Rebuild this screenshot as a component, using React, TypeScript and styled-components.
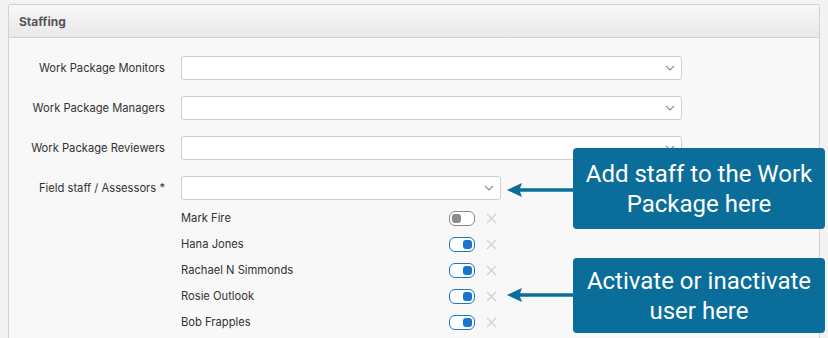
import React from "react";
import styled, { createGlobalStyle } from "styled-components";

const Global = createGlobalStyle`
  html, body { margin: 0; padding: 0; background: #f3f3f3; }
  body { font-family: Inter, "Noto Sans", sans-serif; }
`;

const Page = styled.div`
  position: relative;
  width: 828px;
  height: 338px;
  overflow: hidden;
  padding: 4px 8px 0 8px;
  box-sizing: border-box;
`;

const Panel = styled.section`
  border: 1px solid #d2d2d2;
  border-bottom: none;
  border-radius: 3px 3px 0 0;
  background: #f8f8f8;
  height: 340px;
  box-sizing: border-box;
`;

const Header = styled.div`
  height: 32px;
  display: flex;
  align-items: center;
  padding-left: 10px;
  background: linear-gradient(#f7f7f7, #e9e9e9);
  border-bottom: 1px solid #d2d2d2;
  font-size: 12px;
  font-weight: 700;
  color: #555;
`;

const Form = styled.div`
  display: grid;
  grid-template-columns: 156px 501px;
  column-gap: 16px;
  row-gap: 16px;
  padding-top: 18px;
  align-items: center;
`;

const Label = styled.label`
  text-align: right;
  font-size: 11.2px;
  color: #333;
`;

const Select = styled.div<{ $w?: number }>`
  width: ${(p) => (p.$w ? `${p.$w}px` : "100%")};
  height: 24px;
  box-sizing: border-box;
  background: #fff;
  border: 1px solid #cfcfcf;
  border-radius: 3px;
  display: flex;
  align-items: center;
  justify-content: flex-end;
  padding-right: 6px;
  color: #888;
`;

const StaffList = styled.div`
  grid-column: 2;
  display: flex;
  flex-direction: column;
  margin-top: -11px;
`;

const StaffRow = styled.div`
  display: flex;
  align-items: center;
  height: 26px;
  width: 316px;
`;

const Name = styled.span`
  flex: 1;
  font-size: 11.2px;
  color: #333;
`;

const Toggle = styled.span<{ $on: boolean }>`
  width: 26px;
  height: 15px;
  box-sizing: border-box;
  border: 1px solid ${(p) => (p.$on ? "#1a78c9" : "#8a8a8a")};
  border-radius: 6px;
  background: #fff;
  display: flex;
  align-items: center;
  justify-content: ${(p) => (p.$on ? "flex-end" : "flex-start")};
  padding: 0 2px;
`;

const Knob = styled.span<{ $on: boolean }>`
  width: 9px;
  height: 9px;
  border-radius: 3px;
  background: ${(p) => (p.$on ? "#1774d1" : "#8c8c8c")};
`;

const Remove = styled.span`
  width: 12px;
  margin-left: 10px;
  display: flex;
  align-items: center;
  justify-content: center;
`;

const Callout = styled.div<{ $top: number; $h: number }>`
  position: absolute;
  left: 573px;
  top: ${(p) => p.$top}px;
  width: 252px;
  height: ${(p) => p.$h}px;
  background: #0b6d99;
  border-radius: 4px;
  color: #fff;
  font-family: Roboto, "Noto Sans", sans-serif;
  font-size: 24px;
  line-height: 30px;
  text-align: center;
  display: flex;
  align-items: center;
  justify-content: center;
`;

const Arrow = styled.svg<{ $top: number }>`
  position: absolute;
  left: 505px;
  top: ${(p) => p.$top}px;
`;

const Chevron = () => (
  <svg width="10" height="6" viewBox="0 0 10 6">
    <path d="M1 1l4 4 4-4" fill="none" stroke="#8a8a8a" strokeWidth="1.1" />
  </svg>
);

const Cross = () => (
  <svg width="11" height="11" viewBox="0 0 11 11">
    <path d="M1 1l9 9M10 1l-9 9" stroke="#d0d0d0" strokeWidth="1.3" />
  </svg>
);

const ArrowIcon = ({ top }: { top: number }) => (
  <Arrow $top={top} width="70" height="16" viewBox="0 0 70 16">
    <path d="M2 8 L17 1 L15 6.3 L70 6.3 L70 9.7 L15 9.7 L17 15 Z" fill="#0b6d99" />
  </Arrow>
);

const staff = [
  { name: "Mark Fire", on: false },
  { name: "Hana Jones", on: true },
  { name: "Rachael N Simmonds", on: true },
  { name: "Rosie Outlook", on: true },
  { name: "Bob Frapples", on: true },
];

export default function App() {
  return (
    <>
      <Global />
      <Page>
        <Panel>
          <Header>Staffing</Header>
          <Form>
            <Label>Work Package Monitors</Label>
            <Select><Chevron /></Select>
            <Label>Work Package Managers</Label>
            <Select><Chevron /></Select>
            <Label>Work Package Reviewers</Label>
            <Select><Chevron /></Select>
            <Label>Field staff / Assessors *</Label>
            <Select $w={320}><Chevron /></Select>
            <StaffList>
              {staff.map((s) => (
                <StaffRow key={s.name}>
                  <Name>{s.name}</Name>
                  <Toggle $on={s.on}><Knob $on={s.on} /></Toggle>
                  <Remove><Cross /></Remove>
                </StaffRow>
              ))}
            </StaffList>
          </Form>
        </Panel>
        <ArrowIcon top={182} />
        <Callout $top={148} $h={81}>Add staff to the Work<br />Package here</Callout>
        <ArrowIcon top={287} />
        <Callout $top={258} $h={75}>Activate or inactivate<br />user here</Callout>
      </Page>
    </>
  );
}
